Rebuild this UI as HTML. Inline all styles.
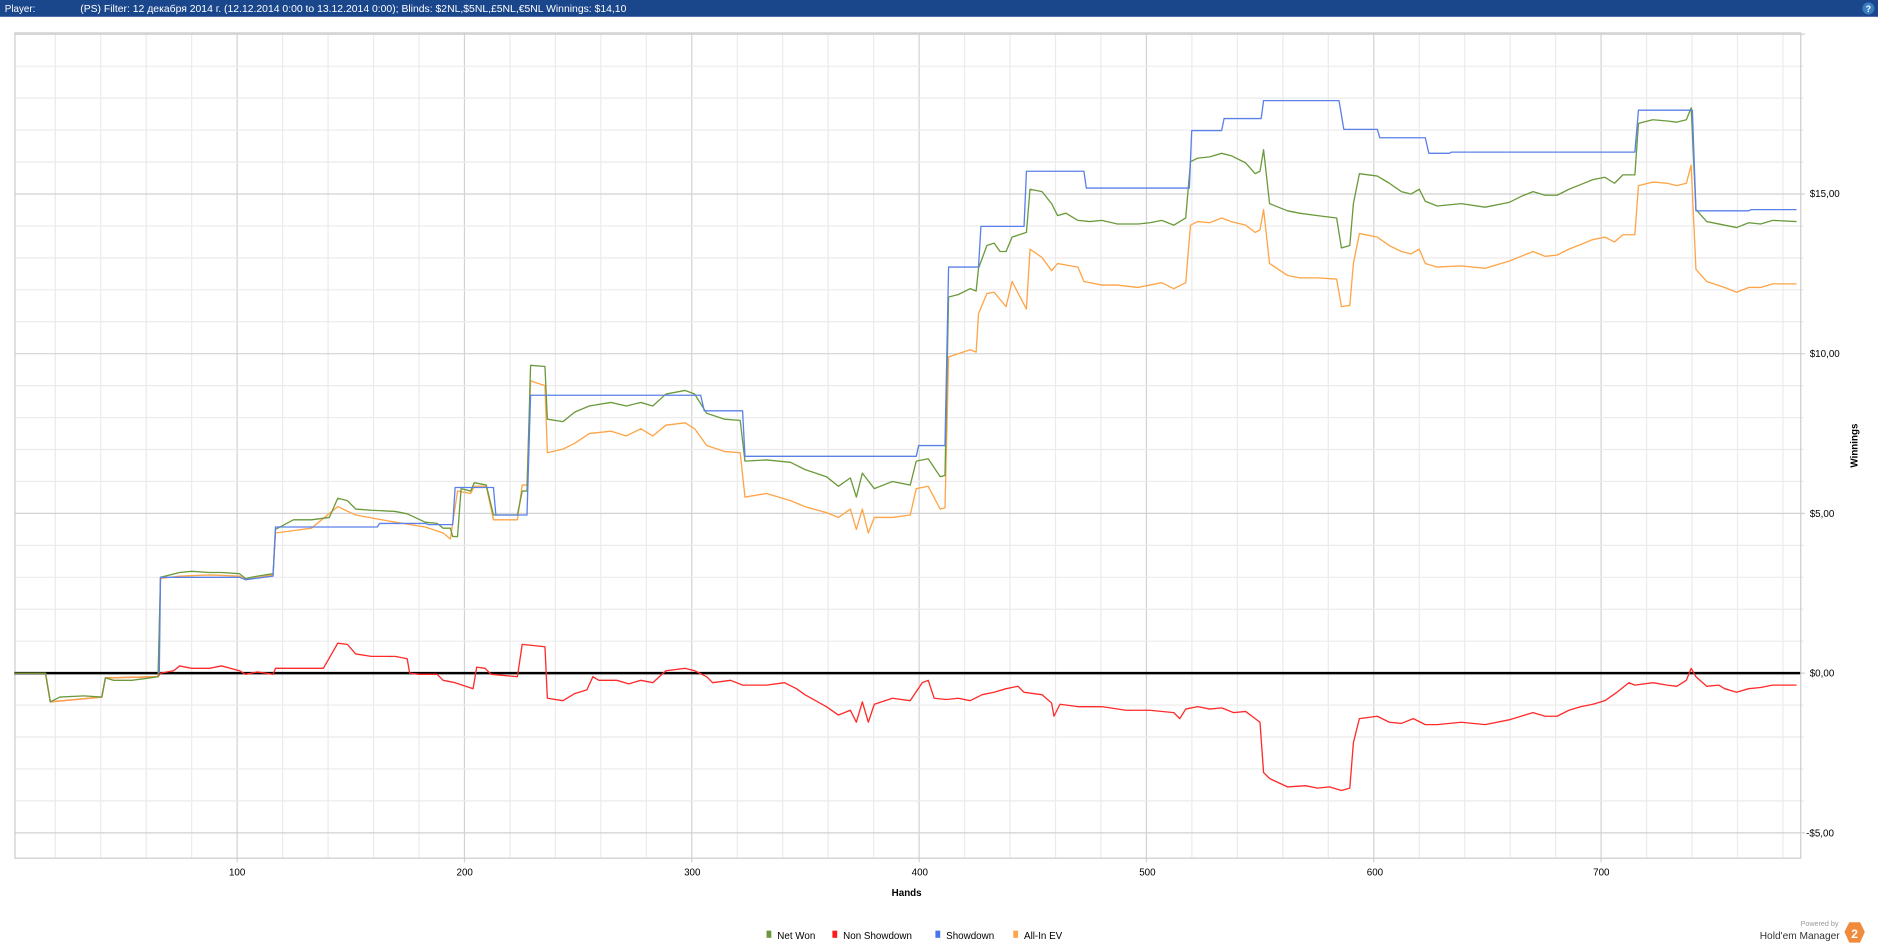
<!DOCTYPE html>
<html><head><meta charset="utf-8"><style>
html,body{margin:0;padding:0;background:#fff;width:1878px;height:948px;overflow:hidden}
svg{display:block}
text{font-family:"Liberation Sans","Noto Sans CJK SC",sans-serif}
</style></head><body>
<svg id="s" width="1878" height="948" viewBox="0 0 1568 791.5" preserveAspectRatio="none" xmlns="http://www.w3.org/2000/svg">
<rect x="0" y="0" width="1568" height="14" fill="#1a468c"/>
<text x="4" y="10" font-size="8.2" fill="#fff">Player:</text>
<text x="67" y="10" font-size="8.2" fill="#fff" textLength="456" lengthAdjust="spacingAndGlyphs">(PS) Filter: 12 декабря 2014 г. (12.12.2014 0:00 to 13.12.2014 0:00); Blinds: $2NL,$5NL,£5NL,€5NL Winnings: $14,10</text>
<circle cx="1560" cy="7" r="5" fill="#3a7cc0"/>
<text x="1560" y="10" font-size="7.5" fill="#fff" text-anchor="middle" font-weight="bold">?</text>
<g id="grid"></g>
<rect x="12.5" y="27.5" width="1491" height="689" fill="none" stroke="#cccccc" stroke-width="1"/>
<line x1="12" y1="562" x2="1503" y2="562" stroke="#000" stroke-width="2"/>
<g fill="none" stroke-width="1.1" stroke-linejoin="round">
<polyline stroke="#ff2a2a" points="12,562 38,562 42,586 85,582 88,566 132,565 134,562 145,560 150,556 160,558 175,558 185,556 200,560 205,563 215,561 228,563 230,558 270,558 282,537 290,538 297,546 310,548 330,548 340,550 342,562 350,563 365,563 370,568 380,570 395,575 398,557 405,558 410,563 432,565 436,538 455,540 457,583 470,585 480,579 490,576 495,565 500,568 515,568 525,571 535,568 545,570 556,560 572,558 580,560 590,565 595,570 610,568 620,572 640,572 655,570 665,575 672,580 690,590 700,597 710,593 715,603 720,586 725,603 730,588 745,583 760,585 770,570 775,568 780,583 790,584 800,583 810,585 820,580 830,578 840,575 850,573 855,578 870,580 878,587 880,598 885,588 900,590 920,590 940,593 960,593 980,595 985,600 990,592 1000,590 1010,592 1020,591 1030,595 1040,594 1048,600 1052,603 1055,645 1060,650 1075,657 1090,656 1100,658 1110,657 1120,660 1127,658 1130,620 1135,600 1150,598 1160,603 1170,604 1180,600 1190,605 1200,605 1220,603 1240,605 1260,601 1270,598 1280,595 1290,598 1300,598 1310,593 1320,590 1330,588 1340,585 1350,578 1360,570 1365,572 1380,570 1392,572 1400,573 1408,568 1412,558 1416,565 1425,573 1435,572 1440,575 1450,578 1460,575 1470,574 1480,572 1500,572"/>
<polyline stroke="#ffa447" points="12,562 38,562 42,586 85,582 88,566 132,565 134,483 150,481 175,480 200,481 205,484 228,480 230,445 245,443 260,441 282,423 297,430 330,436 355,440 370,445 376,450 382,410 393,412 396,406 406,406 412,434 432,434 436,405 440,405 443,318 455,322 457,378 470,375 480,370 492,362 510,360 523,364 535,358 545,364 556,355 572,353 580,358 590,372 605,377 618,378 622,415 640,412 660,418 672,423 690,428 700,432 710,425 715,442 720,425 725,445 730,432 745,432 760,430 765,408 775,406 785,425 789,424 792,298 810,292 815,294 817,262 824,245 830,244 840,256 845,235 857,258 860,208 870,215 878,226 883,220 900,223 905,235 920,238 933,238 950,240 960,238 970,236 980,241 990,236 994,188 1000,185 1010,186 1020,182 1028,185 1040,188 1048,194 1052,192 1055,175 1060,220 1075,230 1085,232 1100,232 1116,233 1120,256 1127,255 1130,220 1135,195 1150,198 1160,205 1170,210 1178,212 1185,208 1190,220 1200,223 1220,222 1240,224 1260,218 1270,214 1280,210 1290,214 1300,213 1310,208 1320,204 1330,200 1340,198 1348,202 1355,196 1365,196 1368,155 1380,152 1392,153 1400,155 1408,153 1412,138 1416,225 1425,235 1440,240 1450,244 1460,240 1470,240 1480,237 1500,237"/>
<polyline stroke="#6b9a3c" points="12,562 38,562 42,586 50,582 70,581 85,582 88,566 95,568 110,568 125,566 132,565 134,482 150,478 160,477 175,478 185,478 200,479 205,483 215,481 228,479 230,442 245,434 260,434 275,432 282,416 290,418 297,425 310,426 330,427 340,429 355,436 365,437 370,441 376,441 378,448 382,448 385,408 393,410 396,403 406,405 412,430 432,430 436,410 440,410 443,305 455,306 457,350 470,352 480,344 492,339 510,336 523,339 535,336 545,339 556,329 572,326 580,329 590,345 605,350 618,351 622,385 640,384 660,386 672,392 690,398 700,406 710,399 715,415 720,395 730,408 745,402 760,405 765,385 775,383 785,398 789,397 792,248 800,246 810,241 815,243 817,224 824,205 830,203 835,210 840,210 845,198 857,194 860,158 870,160 878,170 883,180 890,178 900,184 910,185 920,184 933,187 950,187 960,186 970,184 980,188 990,182 994,135 1000,132 1010,131 1020,128 1028,130 1040,136 1048,145 1052,143 1055,125 1060,170 1075,176 1085,178 1100,180 1116,182 1120,207 1127,205 1130,170 1135,145 1150,147 1160,153 1170,160 1178,162 1185,158 1190,168 1200,172 1220,170 1240,173 1260,169 1270,164 1280,160 1290,163 1300,163 1310,158 1320,154 1330,150 1340,148 1348,153 1355,146 1365,146 1368,103 1380,100 1392,101 1400,102 1408,100 1412,90 1416,175 1425,185 1440,188 1450,190 1460,186 1470,187 1480,184 1500,185"/>
<polyline stroke="#5b80ea" points="133,562 134,482 200,482 205,484 228,481 230,440 315,440 317,437 355,437 358,438 378,438 380,407 412,407 414,430 440,430 443,330 585,330 588,343 620,343 622,381 765,381 767,372 789,372 792,223 817,223 819,189 855,189 857,143 905,143 907,157 993,157 995,109 1020,109 1022,99 1053,99 1055,84 1118,84 1122,108 1150,108 1152,115 1190,115 1193,128 1210,128 1212,127 1365,127 1368,92 1413,92 1416,176 1460,176 1462,175 1500,175"/>
</g>
<g font-size="8.2" fill="#000">
<text x="1511" y="164.5">$15,00</text>
<text x="1511" y="298">$10,00</text>
<text x="1511" y="431.5">$5,00</text>
<text x="1511" y="565">$0,00</text>
<text x="1508" y="698.5">-$5,00</text>
<g text-anchor="middle">
<text x="198" y="731">100</text><text x="388" y="731">200</text><text x="578" y="731">300</text><text x="768" y="731">400</text><text x="958" y="731">500</text><text x="1148" y="731">600</text><text x="1337" y="731">700</text>
</g>
<text x="757" y="748" text-anchor="middle" font-weight="bold">Hands</text>
<text transform="translate(1551,372) rotate(-90)" text-anchor="middle" font-weight="bold">Winnings</text>
</g>
<g font-size="8.2" fill="#000">
<rect x="640" y="777" width="4" height="6" fill="#6b9a3c"/><text x="649" y="784">Net Won</text>
<rect x="695" y="777" width="4" height="6" fill="#ff1a1a"/><text x="704" y="784">Non Showdown</text>
<rect x="781" y="777" width="4" height="6" fill="#4a74ea"/><text x="790" y="784">Showdown</text>
<rect x="846" y="777" width="4" height="6" fill="#ffa447"/><text x="855" y="784">All-In EV</text>
</g>
<text x="1535" y="773" font-size="6" fill="#999" text-anchor="end">Powered by</text>
<text x="1536" y="784" font-size="8.5" fill="#333" text-anchor="end">Hold'em Manager</text>
<polygon points="1544,770 1553,770 1557,778 1553,787 1544,787 1540,778" fill="#f08a3c"/>
<text x="1548.5" y="783" font-size="10" fill="#fff" font-weight="bold" text-anchor="middle">2</text>
</svg>
<script>
var g=document.getElementById('grid'),h='';
for(var k=20;k<=780;k+=20){var x=8.2+1.898*k;var m=k%100==0;h+='<line x1="'+x+'" y1="28" x2="'+x+'" y2="'+(m?720:716)+'" stroke="'+(m?'#d2d2d2':'#ebebeb')+'" stroke-width="1"/>';}
for(var v=-5;v<=20;v++){var y=562-26.67*v;if(y<28||y>716)continue;var m=v%5==0;h+='<line x1="12" y1="'+y+'" x2="'+(1503+(m?4:3))+'" y2="'+y+'" stroke="'+(m?'#d2d2d2':'#ebebeb')+'" stroke-width="1"/>';}
g.innerHTML=h;
</script>
</body></html>
